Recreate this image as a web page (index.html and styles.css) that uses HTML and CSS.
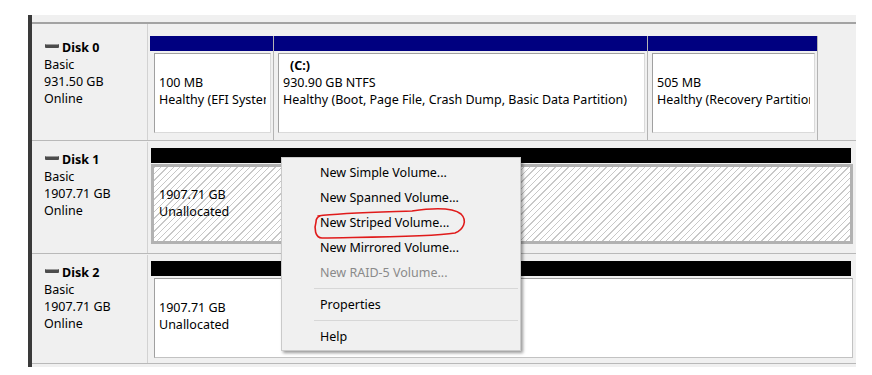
FILE: index.html
```html
<!DOCTYPE html>
<html>
    <head>
        <meta charset="utf-8" />
        <title>Disk Management</title>
        <link rel="stylesheet" href="styles.css">
    </head>
    <body>
        <div class="screen">
            <div class="panel">
                <div class="rows">
                    <div class="disk first">
                        <div class="info">
                            <div class="name"><svg class="ico" width="14" height="5" viewBox="0 0 14 5"><rect x="0" y="0" width="14" height="4" rx="1" fill="#4c4c4c"/><rect x="1" y="0" width="12" height="1" fill="#9a9a9a"/></svg>Disk 0</div>
                            <div>Basic</div>
                            <div>931.50 GB</div>
                            <div>Online</div>
                        </div>
                        <div class="vols">
                            <div class="part p1">
                                <div class="bar blue"></div>
                                <div class="box"><div class="txt"><div>&nbsp;</div><div>100 MB</div><div>Healthy (EFI System Partition)</div></div></div>
                            </div>
                            <div class="part p2">
                                <div class="bar blue"></div>
                                <div class="box"><div class="txt"><div class="drive">(C:)</div><div>930.90 GB NTFS</div><div>Healthy (Boot, Page File, Crash Dump, Basic Data Partition)</div></div></div>
                            </div>
                            <div class="part p3">
                                <div class="bar blue"></div>
                                <div class="box"><div class="txt"><div>&nbsp;</div><div>505 MB</div><div>Healthy (Recovery Partition)</div></div></div>
                            </div>
                        </div>
                    </div>
                    <div class="disk second">
                        <div class="info">
                            <div class="name"><svg class="ico" width="14" height="5" viewBox="0 0 14 5"><rect x="0" y="0" width="14" height="4" rx="1" fill="#4c4c4c"/><rect x="1" y="0" width="12" height="1" fill="#9a9a9a"/></svg>Disk 1</div>
                            <div>Basic</div>
                            <div>1907.71 GB</div>
                            <div>Online</div>
                        </div>
                        <div class="vols">
                            <div class="part wide">
                                <div class="bar black"></div>
                                <div class="box hatched"><div class="txt"><div>&nbsp;</div><div>1907.71 GB</div><div>Unallocated</div></div></div>
                            </div>
                        </div>
                    </div>
                    <div class="disk third">
                        <div class="info">
                            <div class="name"><svg class="ico" width="14" height="5" viewBox="0 0 14 5"><rect x="0" y="0" width="14" height="4" rx="1" fill="#4c4c4c"/><rect x="1" y="0" width="12" height="1" fill="#9a9a9a"/></svg>Disk 2</div>
                            <div>Basic</div>
                            <div>1907.71 GB</div>
                            <div>Online</div>
                        </div>
                        <div class="vols">
                            <div class="part wide">
                                <div class="bar black"></div>
                                <div class="box plain"><div class="txt"><div>&nbsp;</div><div>1907.71 GB</div><div>Unallocated</div></div></div>
                            </div>
                        </div>
                    </div>
                </div>
            </div>

            <div class="menu">
                <div class="item">New Simple Volume...</div>
                <div class="item">New Spanned Volume...</div>
                <div class="item">New Striped Volume...</div>
                <div class="item">New Mirrored Volume...</div>
                <div class="item disabled">New RAID-5 Volume...</div>
                <div class="sep"></div>
                <div class="item">Properties</div>
                <div class="sep"></div>
                <div class="item">Help</div>
            </div>

            <svg class="mark" width="872" height="375" viewBox="0 0 872 375">
                <path d="M318 216 C340 213, 385 212, 412 211 C432 208, 452 207, 461 214 C468 221, 463 230, 455 233 C430 237, 372 237, 322 238 C315 238, 314 228, 316 222 C316 219, 317 217, 320 216" fill="none" stroke="#e01b1b" stroke-width="1.6" stroke-linecap="round"/>
            </svg>
        </div>
    </body>
</html>
```

FILE: styles.css
```css
html {
    margin: 0px;
    padding: 0px;
}
body {
    margin: 0px;
    padding: 0px;
    background-color: #ffffff;
    font-family: 'Noto Sans', 'Liberation Sans', sans-serif;
    font-size: 12.5px;
    color: #000000;
}
.screen {
    position: relative;
    width: 872px;
    height: 375px;
    overflow: hidden;
}
.panel {
    margin: 15px 0px 0px 28px;
    width: 824px;
    border-left: 4px solid #3a3a3a;
    background-color: #f0f0f0;
    padding-top: 7px;
    padding-bottom: 2px;
}
.rows {
    border-top: 2px solid #a3a3a3;
}
.disk {
    display: flex;
    border-bottom: 1px solid #b9b9b9;
    margin-bottom: 1px;
}
.disk.first {
    height: 116px;
}
.disk.second {
    height: 111px;
}
.disk.third {
    height: 108px;
}
.info {
    width: 116px;
    box-sizing: border-box;
    border-right: 1px solid #d2d2d2;
    padding: 9px 0px 0px 12px;
    line-height: 17px;
}
.first .info {
    padding-top: 15px;
}
.name {
    display: flex;
    align-items: center;
    font-weight: bold;
}
.ico {
    margin: 0px 3px 3px 1px;
}
.vols {
    display: flex;
    margin-left: 2px;
    padding-top: 6px;
}
.first .vols {
    padding-top: 12px;
}
.part {
    display: flex;
    flex-direction: column;
    border-right: 1px solid #b4b4b4;
}
.p1 {
    width: 123px;
}
.p2 {
    width: 373px;
}
.p3 {
    width: 169px;
}
.part.wide {
    width: 702px;
    margin-left: 1px;
    border-right: none;
}
.bar {
    height: 15px;
}
.bar.blue {
    background-color: #000080;
}
.bar.black {
    background-color: #000000;
    margin-right: 2px;
}
.box {
    height: 80px;
    box-sizing: border-box;
    margin: 2px 2px 0px 4px;
    background-color: #ffffff;
    border: 1px solid #a0a0a0;
    border-right-color: #dadada;
    border-bottom-color: #dadada;
    padding: 3px 4px 0px 4px;
    line-height: 17px;
}
.box.hatched {
    margin: 1px 0px 0px 0px;
    border: 3px solid #b2b2b2;
    padding: 2px 4px 0px 5px;
    background: repeating-linear-gradient(135deg, #c8c8c8 0px, #c8c8c8 1px, #ffffff 1px, #ffffff 4.5px);
}
.box.plain {
    margin: 2px 0px 0px 3px;
    border-right-color: #c2c2c2;
    border-bottom-color: #c2c2c2;
}
.txt {
    white-space: nowrap;
    overflow: hidden;
}
.drive {
    padding-left: 7px;
    font-weight: bold;
}
.menu {
    position: absolute;
    left: 281px;
    top: 157px;
    width: 240px;
    box-sizing: border-box;
    border: 1px solid #cacaca;
    background-color: #f0f0f0;
    padding: 2px 2px 1px 2px;
    box-shadow: 2px 2px 3px rgba(0, 0, 0, 0.4);
}
.item {
    height: 25px;
    line-height: 25px;
    padding-left: 36px;
    white-space: nowrap;
}
.item.disabled {
    color: #8a8a8a;
}
.sep {
    height: 1px;
    background-color: #d7d7d7;
    margin: 3px 0px 3px 30px;
}
.mark {
    position: absolute;
    left: 0px;
    top: 0px;
    pointer-events: none;
}
```
